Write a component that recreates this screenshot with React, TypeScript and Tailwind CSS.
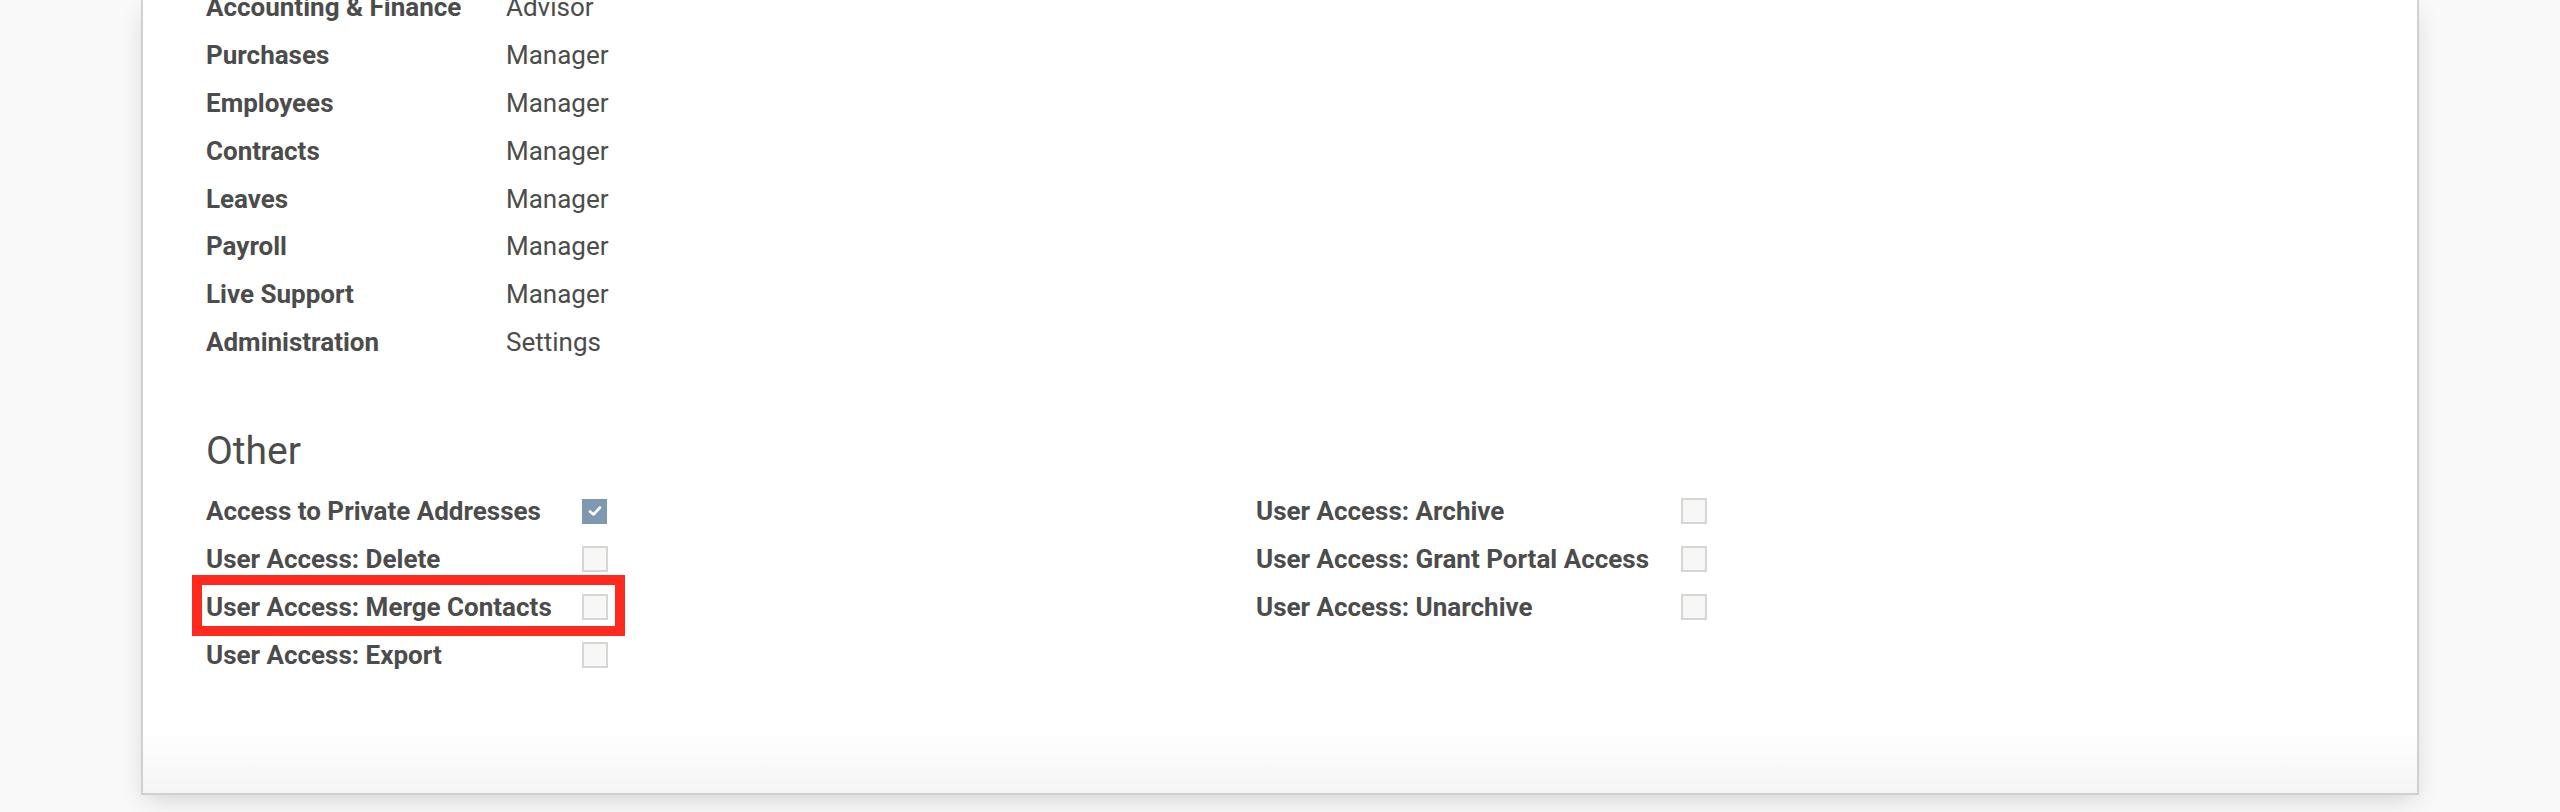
import React from "react";

const rights: [string, string][] = [
  ["Accounting & Finance", "Advisor"],
  ["Purchases", "Manager"],
  ["Employees", "Manager"],
  ["Contracts", "Manager"],
  ["Leaves", "Manager"],
  ["Payroll", "Manager"],
  ["Live Support", "Manager"],
  ["Administration", "Settings"],
];

const left: [string, boolean][] = [
  ["Access to Private Addresses", true],
  ["User Access: Delete", false],
  ["User Access: Merge Contacts", false],
  ["User Access: Export", false],
];

const right: [string, boolean][] = [
  ["User Access: Archive", false],
  ["User Access: Grant Portal Access", false],
  ["User Access: Unarchive", false],
];

function Box({ checked }: { checked: boolean }) {
  if (checked) {
    return (
      <div className="w-[25px] h-[25px] bg-[#7c99b0] flex items-center justify-center">
        <svg width="14" height="12" viewBox="0 0 14 12">
          <path d="M2 6.5 L5.5 9.5 L12 2.5" fill="none" stroke="#ffffff" strokeWidth="2.6" strokeLinecap="round" strokeLinejoin="round" />
        </svg>
      </div>
    );
  }
  return <div className="w-[26px] h-[26px] border-2 border-[#d6d6d6] bg-[#f7f7f6]" />;
}

function Group({ items, labelW }: { items: [string, boolean][]; labelW: string }) {
  return (
    <div className="flex flex-col w-[1050px]">
      {items.map(([label, checked]) => (
        <div key={label} className="flex items-center h-[48px]">
          <div className={labelW + " font-bold whitespace-nowrap"}>{label}</div>
          <Box checked={checked} />
        </div>
      ))}
    </div>
  );
}

export default function App() {
  return (
    <div
      className="w-[2560px] h-[812px] overflow-hidden bg-[#f9f9f9] px-[141px] text-[26px] text-[#4c4c4c]"
      style={{ fontFamily: "Roboto, 'Liberation Sans', sans-serif" }}
    >
      <div className="relative flex flex-col h-[795px] bg-gradient-to-b from-white from-[92%] to-[#f5f5f5] border-x-2 border-b-2 border-[#cdd1d6] shadow-[0_8px_24px_-4px_rgba(0,0,0,0.16)] pl-[63px]">
        <div className="flex flex-col -mt-[16px]">
          {rights.map(([k, v]) => (
            <div key={k} className="flex items-center h-[47.8px]">
              <div className="w-[300px] font-bold">{k}</div>
              <div>{v}</div>
            </div>
          ))}
        </div>
        <div className="mt-[64px] text-[39px] leading-[42px] h-[42px]">Other</div>
        <div className="flex mt-[15px]">
          <Group items={left} labelW="w-[376px]" />
          <Group items={right} labelW="w-[425px]" />
        </div>
        <div className="absolute left-[49px] top-[575px] w-[433px] h-[61px] border-[10px] border-[#ff2a1e]" />
      </div>
    </div>
  );
}
